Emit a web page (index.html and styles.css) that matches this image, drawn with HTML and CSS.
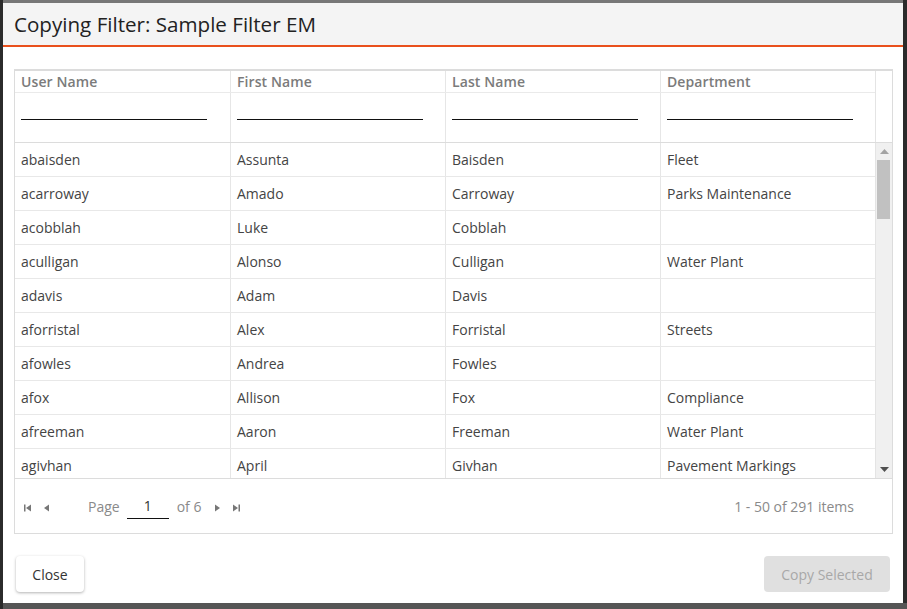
FILE: index.html
```html
<!DOCTYPE html>
<html>
<head>
<meta charset="utf-8">
<link rel="stylesheet" href="styles.css">
</head>
<body>
<div class="topstrip"></div>
<div class="dialog">
  <div class="dlg-header"><h1 class="dlg-title">Copying Filter: Sample Filter EM</h1></div>
  <div class="dlg-body">
    <div class="grid">
      <div class="grid-head">
        <div class="head-cols">
          <div class="hrow titles">
            <div class="hcell">User Name</div>
            <div class="hcell">First Name</div>
            <div class="hcell">Last Name</div>
            <div class="hcell">Department</div>
          </div>
          <div class="hrow filters">
            <div class="fcell"><span class="finput"></span></div>
            <div class="fcell"><span class="finput"></span></div>
            <div class="fcell"><span class="finput"></span></div>
            <div class="fcell"><span class="finput"></span></div>
          </div>
        </div>
        <div class="head-spacer"></div>
      </div>
      <div class="grid-content">
        <div class="rows">
          <div class="row"><div class="cell">abaisden</div><div class="cell">Assunta</div><div class="cell">Baisden</div><div class="cell">Fleet</div></div>
          <div class="row"><div class="cell">acarroway</div><div class="cell">Amado</div><div class="cell">Carroway</div><div class="cell">Parks Maintenance</div></div>
          <div class="row"><div class="cell">acobblah</div><div class="cell">Luke</div><div class="cell">Cobblah</div><div class="cell"></div></div>
          <div class="row"><div class="cell">aculligan</div><div class="cell">Alonso</div><div class="cell">Culligan</div><div class="cell">Water Plant</div></div>
          <div class="row"><div class="cell">adavis</div><div class="cell">Adam</div><div class="cell">Davis</div><div class="cell"></div></div>
          <div class="row"><div class="cell">aforristal</div><div class="cell">Alex</div><div class="cell">Forristal</div><div class="cell">Streets</div></div>
          <div class="row"><div class="cell">afowles</div><div class="cell">Andrea</div><div class="cell">Fowles</div><div class="cell"></div></div>
          <div class="row"><div class="cell">afox</div><div class="cell">Allison</div><div class="cell">Fox</div><div class="cell">Compliance</div></div>
          <div class="row"><div class="cell">afreeman</div><div class="cell">Aaron</div><div class="cell">Freeman</div><div class="cell">Water Plant</div></div>
          <div class="row"><div class="cell">agivhan</div><div class="cell">April</div><div class="cell">Givhan</div><div class="cell">Pavement Markings</div></div>
        </div>
        <div class="vscroll">
          <div class="sarrow"><svg width="9" height="5" viewBox="0 0 9 5"><path d="M0 5 L4.5 0 L9 5 Z" fill="#a3a3a3"/></svg></div>
          <div class="strack"><div class="sthumb"></div></div>
          <div class="sarrow"><svg width="9" height="5" viewBox="0 0 9 5"><path d="M0 0 L4.5 5 L9 0 Z" fill="#505050"/></svg></div>
        </div>
      </div>
      <div class="pager">
        <div class="pager-left">
          <span class="pbtn"><svg width="8" height="8" viewBox="0 0 8 8"><rect x="0" y="0.5" width="1.5" height="7" fill="#777"/><path d="M7 0.5 L2 4 L7 7.5 Z" fill="#777"/></svg></span>
          <span class="pbtn"><svg width="8" height="8" viewBox="0 0 8 8"><path d="M6 0.5 L1 4 L6 7.5 Z" fill="#777"/></svg></span>
          <span class="plabel">Page</span>
          <span class="pinput">1</span>
          <span class="plabel of">of 6</span>
          <span class="pbtn"><svg width="8" height="8" viewBox="0 0 8 8"><path d="M2 0.5 L7 4 L2 7.5 Z" fill="#777"/></svg></span>
          <span class="pbtn"><svg width="8" height="8" viewBox="0 0 8 8"><path d="M1 0.5 L6 4 L1 7.5 Z" fill="#777"/><rect x="6.5" y="0.5" width="1.5" height="7" fill="#777"/></svg></span>
        </div>
        <div class="pager-info">1 - 50 of 291 items</div>
      </div>
    </div>
  </div>
  <div class="dlg-actions">
    <button class="btn btn-close">Close</button>
    <button class="btn btn-copy" disabled>Copy Selected</button>
  </div>
</div>
<div class="bottomstrip"></div>
</body>
</html>
```

FILE: styles.css
```css
* { box-sizing: border-box; }
html, body { margin: 0; padding: 0; }
body {
  background: #2b2b2b;
  width: 907px;
  height: 609px;
  overflow: hidden;
  font-family: "Open Sans", "Liberation Sans", sans-serif;
}
.topstrip {
  height: 3px;
  margin-left: 3px;
  width: 900px;
  background: #777777;
}
.bottomstrip {
  height: 6px;
  margin-left: 3px;
  width: 904px;
  background: #555555;
}
.dialog {
  margin-left: 3px;
  width: 900px;
  height: 600px;
  background: #ffffff;
  display: flex;
  flex-direction: column;
}
.dlg-header {
  height: 44px;
  background: #f4f4f4;
  border-bottom: 2px solid #e9501c;
  display: flex;
  align-items: center;
  padding-left: 11px;
}
.dlg-title {
  margin: 0;
  font-size: 20.6px;
  font-weight: 400;
  color: #222222;
  padding-bottom: 1px;
}
.dlg-body {
  padding: 22px 10px 0 11px;
}
.grid {
  border: 1px solid #dcdcdc;
  border-top-width: 2px;
  width: 879px;
  display: flex;
  flex-direction: column;
}
.grid-head {
  display: flex;
  border-bottom: 1px solid #dcdcdc;
}
.head-cols { display: flex; flex-direction: column; }
.head-spacer {
  width: 17px;
  border-left: 1px solid #e4e4e4;
}
.hrow { display: flex; }
.hcell, .fcell, .cell {
  width: 215px;
  border-left: 1px solid #e6e6e6;
  padding-left: 6px;
}
.hcell:first-child, .fcell:first-child, .cell:first-child { border-left: none; width: 215px; }
.titles { height: 22px; border-bottom: 1px solid #eaeaea; }
.hcell {
  font-size: 14px;
  font-weight: 600;
  color: #7b7b7b;
  line-height: 22px;
  letter-spacing: 0.1px;
}
.filters { height: 49px; }
.fcell { display: flex; align-items: flex-start; padding-top: 26px; }
.finput {
  display: block;
  width: 186px;
  height: 1px;
  background: #111111;
}
.grid-content {
  display: flex;
  height: 336px;
  overflow: hidden;
  border-bottom: 1px solid #dcdcdc;
}
.rows { display: flex; flex-direction: column; width: 861px; }
.row {
  display: flex;
  flex: 0 0 34px;
  height: 34px;
  border-bottom: 1px solid #e8e8e8;
}
.cell {
  font-size: 14px;
  color: #444444;
  line-height: 33px;
  white-space: nowrap;
}
.vscroll {
  width: 17px;
  background: #f0f0f0;
  border-left: 1px solid #e4e4e4;
  display: flex;
  flex-direction: column;
}
.sarrow {
  height: 17px;
  display: flex;
  align-items: center;
  justify-content: center;
}
.strack { flex: 1; padding: 0 2px 0 1px; }
.sthumb { height: 59px; background: #c1c1c1; }
.pager {
  height: 54px;
  display: flex;
  align-items: center;
  justify-content: space-between;
  padding: 0 38px 0 3px;
  font-size: 14px;
  color: #8a8a8a;
}
.pager-left { display: flex; align-items: center; }
.pbtn {
  width: 19px;
  display: flex;
  justify-content: center;
  align-items: center;
  height: 20px;
  margin-top: 3px;
}
.plabel { margin-left: 32px; }
.plabel.of { margin-left: 8px; margin-right: 6px; }
.pinput {
  width: 42px;
  margin-left: 7px;
  text-align: center;
  color: #333333;
  border-bottom: 1px solid #111111;
  line-height: 20px;
  padding-bottom: 2px;
  margin-top: 3px;
}
.pager-info { color: #8a8a8a; }
.dlg-actions {
  display: flex;
  justify-content: space-between;
  padding: 22px 13px 0 13px;
}
.btn {
  height: 36px;
  border-radius: 4px;
  font-family: "Open Sans", "Liberation Sans", sans-serif;
  font-size: 14px;
  border: none;
  padding: 0 16px;
}
.btn-close {
  width: 68px;
  background: #ffffff;
  color: #333333;
  box-shadow: 0 1px 3px rgba(0,0,0,0.3);
}
.btn-copy {
  width: 126px;
  background: #e0e0e0;
  color: #a8a8a8;
}
```
